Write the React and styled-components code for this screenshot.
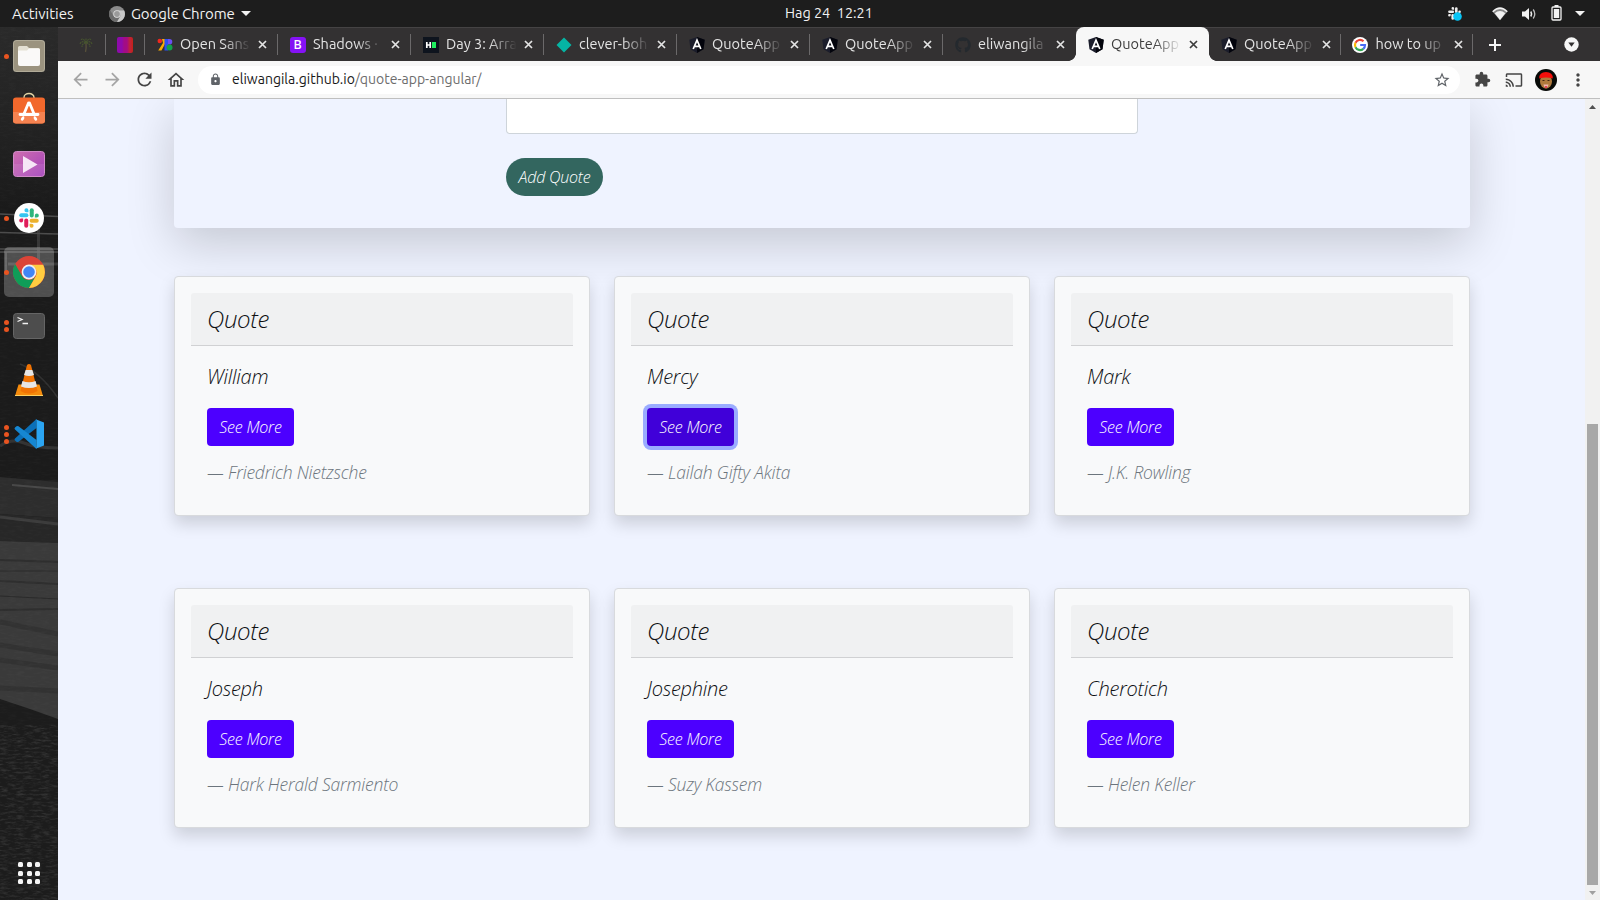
import React from "react";
import styled, { createGlobalStyle, css } from "styled-components";
import {
  MdArrowBack,
  MdArrowForward,
  MdRefresh,
  MdOutlineHome,
  MdLock,
  MdStarBorder,
  MdExtension,
  MdCast,
  MdMoreVert,
} from "react-icons/md";
import { FaGithub } from "react-icons/fa";

const ui = `Ubuntu, "Noto Sans", "Open Sans", sans-serif`;

const GlobalStyle = createGlobalStyle`
  *, *::before, *::after { box-sizing: border-box; }
  html, body { margin: 0; padding: 0; overflow: hidden; }
  body { font-family: ${ui}; background: #eff3ff; }
  svg { display: block; flex: none; }
`;

const Desktop = styled.div`
  width: 1600px;
  height: 900px;
  display: flex;
  flex-direction: column;
  overflow: hidden;
`;

/* ---------- GNOME top bar ---------- */

const TopBar = styled.header`
  height: 27px;
  flex: none;
  background: #1d1d1d;
  color: #f2f2f2;
  display: grid;
  grid-template-columns: 1fr auto 1fr;
  align-items: center;
  font-size: 15px;
  line-height: 27px;
  white-space: pre;
`;

const TopLeft = styled.div`
  display: flex;
  align-items: center;
  padding-left: 12px;
`;

const ActivitiesLabel = styled.span`
  width: 97px;
`;

const AppMenu = styled.div`
  display: flex;
  align-items: center;
  gap: 6px;
`;

const AppName = styled.span`
  width: 104px;
  letter-spacing: -0.12px;
`;

const Clock = styled.div`
  margin-left: 58px;
  width: 88px;
  font-size: 14.4px;
`;

const Tray = styled.div`
  display: flex;
  align-items: center;
  justify-content: flex-end;
  padding-right: 11px;
`;

const TrayItem = styled.div`
  width: ${(p) => p.$w}px;
  display: flex;
  justify-content: center;
`;

const Body = styled.div`
  flex: 1;
  min-height: 0;
  display: flex;
`;

/* ---------- Dock ---------- */

const Dock = styled.nav`
  position: relative;
  width: 58px;
  flex: none;
  background: #1f1f1f;
  display: flex;
  flex-direction: column;
  padding-top: 2px;
  overflow: hidden;
`;

const Wallpaper = styled.svg`
  position: absolute;
  inset: 0;
`;

const DockSlot = styled.div`
  position: relative;
  height: 54px;
  display: flex;
  align-items: center;
`;

const RunningDots = styled.div`
  width: 4px;
  margin-left: 4px;
  display: flex;
  flex-direction: column;
  align-items: center;
  gap: 2px;
  z-index: 1;
`;

const Dot = styled.i`
  width: 5px;
  height: 5px;
  border-radius: 50%;
  background: #e95420;
`;

const DockTile = styled.div`
  width: 50px;
  height: 50px;
  margin-left: -4px;
  border-radius: 5px;
  display: flex;
  align-items: center;
  justify-content: center;
  background: ${(p) => (p.$active ? "rgba(255,255,255,0.23)" : "transparent")};
`;

const AppsButton = styled.div`
  position: relative;
  margin: auto 0 16px 18px;
  width: 22px;
  display: grid;
  grid-template-columns: repeat(3, 5px);
  gap: 3.5px;
`;

const AppsCell = styled.i`
  height: 5px;
  border-radius: 1.5px;
  background: #f5f5f5;
`;

/* ---------- Browser chrome ---------- */

const Browser = styled.main`
  flex: 1;
  min-width: 0;
  display: flex;
  flex-direction: column;
`;

const TabStrip = styled.div`
  height: 34px;
  flex: none;
  display: flex;
  background: #333132;
  border-top: 1px solid #454344;
`;

const PinnedTab = styled.div`
  width: ${(p) => p.$w}px;
  padding-left: ${(p) => p.$pad}px;
  height: 33px;
  display: flex;
  align-items: center;
  position: relative;
`;

const divider = css`
  &::after {
    content: "";
    position: absolute;
    right: 0;
    top: 6px;
    height: 21px;
    width: 1px;
    background: #6b696a;
  }
`;

const PinnedDivided = styled(PinnedTab)`
  ${divider}
`;

const Tab = styled.div`
  position: relative;
  width: ${(p) => p.$w || 133}px;
  flex: none;
  height: 33px;
  display: flex;
  align-items: center;
  padding-left: 11.5px;
  color: #e4e4e4;
  ${(p) => p.$line && divider}
  ${(p) =>
    p.$active &&
    css`
      height: 34px;
      margin-top: -1px;
      padding-top: 1px;
      background: #f7f7f7;
      color: #3c3c3c;
      border-radius: 8px 8px 0 0;
      &::before,
      &::after {
        content: "";
        position: absolute;
        bottom: 0;
        width: 8px;
        height: 8px;
      }
      &::before {
        left: -8px;
        background: radial-gradient(circle at 0 0, transparent 7.6px, #f7f7f7 8.2px);
      }
      &::after {
        right: -8px;
        background: radial-gradient(circle at 100% 0, transparent 7.6px, #f7f7f7 8.2px);
      }
    `}
`;

const Favicon = styled.span`
  width: 16px;
  height: 16px;
  margin-right: 7.5px;
  flex: none;
  display: flex;
  align-items: center;
  justify-content: center;
`;

const TabTitle = styled.span`
  width: 70px;
  flex: none;
  position: relative;
  top: -1px;
  overflow: hidden;
  white-space: nowrap;
  font-size: 14.5px;
  line-height: 22px;
  mask-image: linear-gradient(90deg, #000 62%, transparent 101%);
`;

const TabClose = styled.span`
  margin-left: 8px;
`;

const StripEnd = styled.div`
  flex: 1;
  display: flex;
  align-items: center;
  justify-content: space-between;
  padding: 0 21px 0 16px;
  color: #f5f5f5;
`;

const Gradient = styled.span`
  width: 16px;
  height: 16px;
  border-radius: 2px;
  background: linear-gradient(90deg, #8e0bab 0 30%, #a30c84 45% 62%, #c0223b 80%, #c32318);
`;

const BootstrapMark = styled.span`
  width: 16px;
  height: 16px;
  border-radius: 3px;
  background: #8512f5;
  color: #fff;
  font: 500 12.5px/16px "Noto Sans", sans-serif;
  text-align: center;
`;

const Toolbar = styled.div`
  height: 38px;
  flex: none;
  display: flex;
  align-items: center;
  background: #f7f7f7;
  border-bottom: 1px solid #bfbfbf;
  padding-left: 6px;
`;

const ToolButton = styled.span`
  width: 32px;
  display: flex;
  justify-content: center;
  color: ${(p) => (p.$off ? "#a5a5a5" : "#454545")};
`;

const Omnibox = styled.div`
  width: 1262px;
  height: 28px;
  margin-left: 6px;
  margin-right: 6px;
  border-radius: 14px;
  background: #fff;
  display: flex;
  align-items: center;
  padding: 0 9px 0 11px;
  color: #5f6368;
`;

const Url = styled.span`
  flex: 1;
  margin-left: 10px;
  padding-bottom: 2px;
  font-size: 14px;
  line-height: 22px;
  letter-spacing: 0.01px;
  color: #6d6d6d;
`;

const Host = styled.span`
  color: #181818;
`;

/* ---------- Page ---------- */

const Viewport = styled.div`
  flex: 1;
  min-height: 0;
  display: flex;
`;

const Page = styled.div`
  flex: 1;
  overflow: hidden;
  background: #eff3ff;
  padding: 0 115px 0 116px;
  font-family: "Open Sans", sans-serif;
  font-weight: 300;
  font-style: italic;
  font-size: 16px;
  line-height: 1.5;
  color: #0e1013;
`;

const FormPanel = styled.section`
  height: 129px;
  padding: 0 332px;
  border-radius: 0 0 4px 4px;
  background: #eff3ff;
  box-shadow: 0 16px 48px rgba(0, 0, 0, 0.175);
`;

const TextField = styled.div`
  height: 35px;
  width: 632px;
  border: 1px solid #ced4da;
  border-top: 0;
  border-radius: 0 0 4px 4px;
  background: #fff;
`;

const buttonBase = css`
  display: block;
  height: 38px;
  padding: 0;
  border: 0;
  color: #fff;
  font: inherit;
  font-size: 16px;
  line-height: 38px;
  letter-spacing: -0.22px;
  text-align: center;
`;

const AddButton = styled.button`
  ${buttonBase}
  width: 97px;
  margin-top: 24px;
  border-radius: 20px;
  background: #33665f;
`;

const CardGrid = styled.section`
  margin-top: 48px;
  display: grid;
  grid-template-columns: repeat(3, 416px);
  column-gap: 24px;
  row-gap: 72px;
`;

const Card = styled.article`
  height: 240px;
  padding: 16px;
  border: 1px solid #d8dadd;
  border-radius: 4px;
  background: #f8f9fa;
  background-clip: padding-box;
  box-shadow: 0 8px 16px rgba(0, 0, 0, 0.15);
`;

const CardHeader = styled.h4`
  height: 53px;
  margin: 0;
  padding: 8px 16px;
  border-bottom: 1px solid #d0d1d3;
  border-radius: 3px 3px 0 0;
  background: #f0f1f2;
  font-size: 24px;
  font-weight: 300;
  line-height: 36px;
  letter-spacing: -0.35px;
`;

const CardBody = styled.div`
  padding: 16px;
`;

const Submitter = styled.p`
  margin: 0 0 16px;
  font-size: 20px;
  line-height: 30px;
  letter-spacing: -0.25px;
`;

const MoreButton = styled.button`
  ${buttonBase}
  width: 87px;
  border-radius: 4px;
  background: ${(p) => (p.$focused ? "#4000d9" : "#4c00ff")};
  box-shadow: ${(p) => (p.$focused ? "0 0 0 4px #9aacff" : "none")};
`;

const Author = styled.footer`
  margin-top: 13px;
  font-size: 17.5px;
  line-height: 26px;
  letter-spacing: -0.19px;
  color: #6c757d;
`;

const Scrollbar = styled.div`
  width: 15px;
  flex: none;
  background: #f1f1f1;
  display: flex;
  flex-direction: column;
  align-items: center;
  justify-content: space-between;
  padding: 6px 0 5px;
`;

const Thumb = styled.div`
  width: 11px;
  height: 461px;
  margin: auto 0 6px;
  background: #a8a8a8;
`;

/* ---------- Drawings ---------- */

const CloseMark = () => (
  <svg width="9" height="9" viewBox="0 0 9 9">
    <path d="M1 1l7 7M8 1 1 8" fill="none" stroke="currentColor" strokeWidth="1.7" />
  </svg>
);

const PlusMark = () => (
  <svg width="12" height="12" viewBox="0 0 12 12">
    <path d="M6 0v12M0 6h12" fill="none" stroke="currentColor" strokeWidth="2" />
  </svg>
);

const SlackMark = ({ size, mono }) => {
  const c = mono ? ["#eee", "#eee", "#eee", "#eee"] : ["#36c5f0", "#2eb67d", "#ecb22e", "#e01e5a"];
  return (
    <svg width={size} height={size} viewBox="0 0 24 24">
      {c.map((fill, i) => (
        <g key={i} fill={fill} transform={`rotate(${i * 90} 12 12)`}>
          <rect x="0.3" y="6.3" width="11" height="4.8" rx="2.4" />
          <path d="M8.9 0.2a2.4 2.4 0 0 1 2.4 2.4V5H8.9a2.4 2.4 0 0 1 0-4.8z" />
        </g>
      ))}
    </svg>
  );
};

const ChromeMark = ({ size, colors }) => (
  <svg width={size} height={size} viewBox="0 0 32 32">
    <circle cx="16" cy="16" r="16" fill={colors[0]} />
    <path d="M2.14 8A16 16 0 0 0 16 32l6.9-12A8 8 0 0 1 9 20z" fill={colors[1]} />
    <path d="M30.2 8.8H16A8 8 0 0 1 22.9 20L16 32A16 16 0 0 0 30.2 8.8z" fill={colors[2]} />
    <circle cx="16" cy="16" r="7.4" fill={colors[4]} />
    <circle cx="16" cy="16" r="5.8" fill={colors[3]} />
  </svg>
);

const FilesIcon = () => (
  <svg width="32" height="32" viewBox="0 0 32 32">
    <rect width="32" height="32" rx="3.5" fill="#b1ab98" />
    <rect x="1" y="1" width="30" height="30" rx="3" fill="#9b937f" />
    <path d="M5 9V7.500a1.500 1.500 0 0 1 1.500-1.500H14l2 2h9.500A1.500 1.500 0 0 1 27 9.500V14H5z" fill="#e4e0d3" />
    <path d="M5 10.500h9l2-2h9.500a1.500 1.500 0 0 1 1.500 1.500V24a2 2 0 0 1-2 2H7a2 2 0 0 1-2-2z" fill="#faf9f8" />
  </svg>
);

const SoftwareIcon = () => (
  <svg width="32" height="36" viewBox="0 0 32 36">
    <path d="M11 8V5.500a5 4 0 0 1 10 0V8" fill="none" stroke="#e2d3a4" strokeWidth="1.4" />
    <rect y="5.500" width="32" height="26" rx="3" fill="#f2682c" />
    <path d="M0 20h32v8.500a3 3 0 0 1-3 3H3a3 3 0 0 1-3-3z" fill="#f58250" />
    <path d="M15.500 11 10.500 23M16.500 11l5 12M7 22.500h18M10 26l-.8 1.300M22 26l.8 1.300" stroke="#fff" strokeWidth="2.800" fill="none" strokeLinecap="round" />
  </svg>
);

const VideoIcon = () => (
  <svg width="32" height="26" viewBox="0 0 32 26">
    <defs>
      <linearGradient id="vid" x1="0" y1="0" x2="1" y2="1">
        <stop offset="0" stopColor="#cf6fb0" />
        <stop offset="1" stopColor="#a341bb" />
      </linearGradient>
    </defs>
    <rect x=".5" y=".5" width="31" height="25" rx="3" fill="url(#vid)" stroke="#d08bc8" />
    <path d="M1 13h30v9a3 3 0 0 1-3 3H4a3 3 0 0 1-3-3z" fill="#fff" opacity=".09" />
    <path d="M10 5v17l14.500-8.500z" fill="#f6e6f6" />
  </svg>
);

const SlackIcon = () => (
  <svg width="30" height="30" viewBox="0 0 30 30">
    <circle cx="15" cy="15" r="15" fill="#fff" />
    <svg x="5" y="5" width="20" height="20">
      <SlackMark size={20} />
    </svg>
  </svg>
);

const TerminalIcon = () => (
  <svg width="32" height="26" viewBox="0 0 32 26">
    <rect x=".5" y=".5" width="31" height="25" rx="3" fill="#4d4d4d" stroke="#656565" />
    <path d="M4.500 4.500 9 6.500 4.500 8.500M9.500 10.500h5.500" fill="none" stroke="#f2f2f2" strokeWidth="1.300" />
  </svg>
);

const VlcIcon = () => (
  <svg width="28" height="32" viewBox="0 0 28 32">
    <path d="M3.500 20.500h21L28 32H0z" fill="#f68b0c" />
    <path d="M0 31h28v1H0z" fill="#ffd060" />
    <path d="M12 1q2-2 4 0l6.500 26q-8.500 5-17 0z" fill="#f07304" />
    <path d="M10.700 6h6.600l1.700 5q-5 2-10 0z" fill="#e6e6e6" />
    <path d="M7.400 17q6.600 2.500 13.200 0l1.400 5.500q-8 3-16 0z" fill="#e6e6e6" />
  </svg>
);

const CodeIcon = () => (
  <svg width="30" height="30" viewBox="0 0 30 30">
    <path d="M22.500 0 1 19.500q-1 1 0 2l1.500 1.200q1 .8 2 0L22.500 9z" fill="#0b70b8" />
    <path d="M22.500 30 1 10.500q-1-1 0-2l1.500-1.200q1-.8 2 0L22.500 21z" fill="#1687d2" />
    <path d="M21.500.3 30 3.500v23L21.500 29.700q1-.5 1-2V2.300q0-1.500-1-2z" fill="#2ba5f2" />
  </svg>
);

const AngularMark = () => (
  <svg width="16" height="16" viewBox="0 0 16 16">
    <path d="M8 0 15.700 2.700 14.500 12.300 8 16 1.500 12.300.3 2.700z" fill="#1b1d2b" />
    <path d="M8 0v16l6.500-3.700L15.700 2.700z" fill="#03040c" />
    <path d="M4.200 12 8 3.200 11.800 12M5.800 9.300h4.400" fill="none" stroke="#fff" strokeWidth="1.700" />
  </svg>
);

const GoogleMark = () => (
  <svg width="16" height="16" viewBox="0 0 16 16">
    <circle cx="8" cy="8" r="8" fill="#fff" />
    <g fill="none" strokeWidth="2.200">
      <path d="M11.500 4.300A5 5 0 0 0 3.500 5.800" stroke="#ea4335" />
      <path d="M3.500 5.800a5 5 0 0 0 0 4.400" stroke="#fbbc05" />
      <path d="M3.500 10.200a5 5 0 0 0 7.800 1.600" stroke="#34a853" />
      <path d="M11.300 11.800A5 5 0 0 0 13 8H8.200" stroke="#4a6cf5" />
    </g>
  </svg>
);

const FontsMark = () => (
  <svg width="16" height="16" viewBox="0 0 16 16">
    <path d="M5 2h3.500v4L4.500 13.500H1.200L6 6z" fill="#f9ab00" />
    <rect x="7.500" y="2" width="3.700" height="11.500" fill="#2b50f0" />
    <circle cx="2.800" cy="4" r="2.300" fill="#f0281e" />
    <path d="M11 2h1.500a2.800 2.800 0 0 1 0 5.600H11z" fill="#6a4ff2" />
    <circle cx="12.500" cy="10.600" r="3" fill="#11a04c" />
  </svg>
);

const HackerMark = () => (
  <svg width="16" height="16" viewBox="0 0 16 16">
    <rect width="16" height="16" fill="#0e141e" />
    <path d="M3.800 5v6M7.200 5v6M3.500 8H7" stroke="#fff" strokeWidth="1.700" />
    <rect x="9" y="5" width="4" height="6" fill="#1ff05f" />
  </svg>
);

const DiamondMark = () => (
  <svg width="16" height="16" viewBox="0 0 16 16">
    <path d="M8 .5 15.500 8 8 15.500.5 8z" fill="#05b5a4" />
  </svg>
);

const PalmMark = () => (
  <svg width="14" height="16" viewBox="0 0 14 16" fill="none" stroke="#46532f">
    <path d="M6.500 15q1-4 .5-9" stroke="#57503a" strokeWidth="1.300" />
    <path d="M7 6Q3 3 1 7M7 6q4-3 6 1M7 6Q4 0 2 3M7 6q3-6 5-3M7 6q-4 0-4 4M7 6q4 0 4 4M7 6V1" strokeWidth="1.200" strokeDasharray="2 .6" />
  </svg>
);

const Avatar = () => (
  <svg width="22" height="22" viewBox="0 0 22 22">
    <circle cx="11" cy="11" r="11" fill="#080a08" />
    <ellipse cx="11" cy="12.500" rx="6" ry="7.200" fill="#b07a3c" />
    <path d="M4.200 9.500Q4 3 11 3t6.800 6.500Q11 7.500 4.200 9.500z" fill="#f50f0b" />
    <path d="M7.500 11.500h2M12.500 11.500h2" stroke="#40240f" strokeWidth="1.200" />
    <path d="M8.500 15.500h5q-.5 3-2.500 3t-2.500-3z" fill="#f0b6ad" />
    <path d="M10 17h2v2h-2z" fill="#e2435c" />
  </svg>
);

const Caret = ({ w = 10, h = 5, up, fill = "#f2f2f2" }) => (
  <svg width={w} height={h} viewBox="0 0 10 5" preserveAspectRatio="none">
    <path d={up ? "M0 5 5 0l5 5z" : "M0 0h10L5 5z"} fill={fill} />
  </svg>
);

const SlackTray = () => (
  <svg width="16" height="16" viewBox="0 0 16 16">
    <svg x="1" y="1" width="13" height="13">
      <SlackMark size={13} mono />
    </svg>
    <circle cx="10.500" cy="10.500" r="4.300" fill="#08c4f5" />
  </svg>
);

const Wifi = () => (
  <svg width="16" height="14" viewBox="0 0 16 14">
    <path d="M.7 4.700Q8-2.500 15.300 4.700L8 13.300z" fill="#8a8a8a" />
    <path d="M.7 4.700Q8-2.500 15.300 4.700" fill="none" stroke="#f2f2f2" strokeWidth="1.500" />
    <path d="M2.700 6.200Q8 1.800 13.300 6.200L8 13z" fill="#f2f2f2" />
  </svg>
);

const Volume = () => (
  <svg width="16" height="14" viewBox="0 0 16 14">
    <path d="M1 4.500h3L8 1v12L4 9.500H1z" fill="#f2f2f2" />
    <path d="M9.800 4.500q1.500 2.500 0 5" fill="none" stroke="#f2f2f2" strokeWidth="1.500" />
    <path d="M12.200 2.500q3.200 4.500 0 9" fill="none" stroke="#bdbdbd" strokeWidth="1.300" />
  </svg>
);

const Battery = () => (
  <svg width="11" height="18" viewBox="0 0 11 18">
    <path d="M3.500 0h4v2h-4z" fill="#f2f2f2" />
    <rect x="1" y="2" width="9" height="13" rx="1" fill="none" stroke="#f2f2f2" strokeWidth="1.300" />
    <rect x="2.800" y="4" width="5.400" height="9" fill="#f2f2f2" />
  </svg>
);

const DropCircle = () => (
  <svg width="15" height="15" viewBox="0 0 15 15">
    <circle cx="7.500" cy="7.500" r="7.200" fill="#f7f7f7" />
    <path d="M4.300 5.500h6.400l-3.200 4.300z" fill="#333132" />
  </svg>
);

const DockWallpaper = () => (
  <Wallpaper width="58" height="873" viewBox="0 27 58 873">
    <defs>
      <filter id="grain" x="0" y="0" width="100%" height="100%">
        <feTurbulence type="fractalNoise" baseFrequency="0.12 0.5" numOctaves="3" seed="4" />
        <feColorMatrix values="0 0 0 0 1  0 0 0 0 1  0 0 0 0 1  0.9 0 0 0 -0.38" />
      </filter>
      <linearGradient id="sky" x1="0" y1="0" x2="0" y2="1">
        <stop offset="0" stopColor="#2a2a2a" />
        <stop offset=".55" stopColor="#222" />
        <stop offset="1" stopColor="#191919" />
      </linearGradient>
    </defs>
    <rect y="27" width="58" height="193" fill="url(#sky)" />
    <rect y="215" width="58" height="265" fill="#1b1b1b" />
    <g stroke="#4b4b4b" fill="none">
      <path d="M0 214l58 2.500M0 232.500l58 1.500M0 249h58M0 252h58M6 252v22" strokeWidth="1.500" />
      <path d="M8 264h50M38.500 215v49" strokeWidth="3" opacity=".6" />
      <path d="M20 364q20 8 38 34" stroke="#303030" strokeWidth="1.500" />
      <path d="M0 446q12-8 24-3t34 5" stroke="#333" strokeWidth="3" />
    </g>
    <path d="M0 477l58 5v36L0 514z" fill="#2d2d2d" />
    <path d="M12 485l46 4" stroke="#484848" strokeWidth="2" />
    <path d="M0 514l58 4v25l-58-2z" fill="#272727" />
    <path d="M0 517l58 7" stroke="#3c3c3c" strokeWidth="3" />
    <path d="M0 541l58 2v178L30 710 0 700z" fill="#3a3a3a" />
    <g stroke="#2a2a2a" fill="none">
      <path d="M0 560l58 2M0 581l58 3M0 610l58-1" strokeWidth="2" opacity=".7" />
      <path d="M0 622l58 12M0 645l58 9M0 660l58 8M0 688l58 3" strokeWidth="5" opacity=".45" />
      <path d="M0 571h58M0 596l58 3" strokeWidth="1" />
    </g>
    <path d="M0 699l30 10 28 10v181H0z" fill="#1c1c1c" />
    <rect y="27" width="58" height="873" filter="url(#grain)" opacity=".06" />
    <rect y="725" width="58" height="175" filter="url(#grain)" opacity=".22" />
  </Wallpaper>
);

/* ---------- Data ---------- */

const dockApps = [
  { icon: <FilesIcon />, dots: 1 },
  { icon: <SoftwareIcon />, dots: 0 },
  { icon: <VideoIcon />, dots: 0 },
  { icon: <SlackIcon />, dots: 1 },
  {
    icon: <ChromeMark size={32} colors={["#db4437", "#0f9d58", "#ffcd40", "#4285f4", "#f1f1f1"]} />,
    dots: 1,
    active: true,
  },
  { icon: <TerminalIcon />, dots: 2 },
  { icon: <VlcIcon />, dots: 0 },
  { icon: <CodeIcon />, dots: 3 },
];

const tabs = [
  { icon: <FontsMark />, title: "Open Sans" },
  { icon: <BootstrapMark>B</BootstrapMark>, title: "Shadows ·" },
  { icon: <HackerMark />, title: "Day 3: Arra" },
  { icon: <DiamondMark />, title: "clever-boh" },
  { icon: <AngularMark />, title: "QuoteApp" },
  { icon: <AngularMark />, title: "QuoteApp" },
  { icon: <FaGithub size={16} color="#24292e" />, title: "eliwangila" },
  { icon: <AngularMark />, title: "QuoteApp", active: true },
  { icon: <AngularMark />, title: "QuoteApp", w: 131.5 },
  { icon: <GoogleMark />, title: "how to up", w: 132 },
];

const quotes = [
  { name: "William", author: "Friedrich Nietzsche" },
  { name: "Mercy", author: "Lailah Gifty Akita", focused: true },
  { name: "Mark", author: "J.K. Rowling" },
  { name: "Joseph", author: "Hark Herald Sarmiento" },
  { name: "Josephine", author: "Suzy Kassem" },
  { name: "Cherotich", author: "Helen Keller" },
];

export default function App() {
  return (
    <Desktop>
      <GlobalStyle />
      <TopBar>
        <TopLeft>
          <ActivitiesLabel>Activities</ActivitiesLabel>
          <AppMenu>
            <ChromeMark size={16} colors={["#8b8b8b", "#6c6c6c", "#c9c9c9", "#9a9a9a", "#e0e0e0"]} />
            <AppName>Google Chrome</AppName>
            <Caret />
          </AppMenu>
        </TopLeft>
        <Clock>Hag 24  12:21</Clock>
        <Tray>
          <TrayItem $w={60}><SlackTray /></TrayItem>
          <TrayItem $w={30}><Wifi /></TrayItem>
          <TrayItem $w={28}><Volume /></TrayItem>
          <TrayItem $w={27}><Battery /></TrayItem>
          <TrayItem $w={19}><Caret /></TrayItem>
        </Tray>
      </TopBar>
      <Body>
        <Dock>
          <DockWallpaper />
          {dockApps.map((app, i) => (
            <DockSlot key={i}>
              <RunningDots>
                {Array.from({ length: app.dots }, (_, n) => (
                  <Dot key={n} />
                ))}
              </RunningDots>
              <DockTile $active={app.active}>{app.icon}</DockTile>
            </DockSlot>
          ))}
          <AppsButton>
            {Array.from({ length: 9 }, (_, n) => (
              <AppsCell key={n} />
            ))}
          </AppsButton>
        </Dock>
        <Browser>
          <TabStrip>
            <PinnedDivided $w={48} $pad={21}><PalmMark /></PinnedDivided>
            <PinnedDivided $w={39} $pad={11}><Gradient /></PinnedDivided>
            {tabs.map((t, i) => (
              <Tab key={i} $w={t.w} $active={t.active} $line={!t.active && !(tabs[i + 1] && tabs[i + 1].active)}>
                <Favicon>{t.icon}</Favicon>
                <TabTitle>{t.title}</TabTitle>
                <TabClose><CloseMark /></TabClose>
              </Tab>
            ))}
            <StripEnd>
              <PlusMark />
              <DropCircle />
            </StripEnd>
          </TabStrip>
          <Toolbar>
            <ToolButton $off><MdArrowBack size={21} /></ToolButton>
            <ToolButton $off><MdArrowForward size={21} /></ToolButton>
            <ToolButton><MdRefresh size={21} /></ToolButton>
            <ToolButton><MdOutlineHome size={20} /></ToolButton>
            <Omnibox>
              <MdLock size={13} />
              <Url><Host>eliwangila.github.io</Host>/quote-app-angular/</Url>
              <MdStarBorder size={18} />
            </Omnibox>
            <ToolButton><MdExtension size={17} /></ToolButton>
            <ToolButton><MdCast size={18} /></ToolButton>
            <ToolButton><Avatar /></ToolButton>
            <ToolButton><MdMoreVert size={20} /></ToolButton>
          </Toolbar>
          <Viewport>
            <Page>
              <FormPanel>
                <TextField />
                <AddButton>Add Quote</AddButton>
              </FormPanel>
              <CardGrid>
                {quotes.map((q) => (
                  <Card key={q.name}>
                    <CardHeader>Quote</CardHeader>
                    <CardBody>
                      <Submitter>{q.name}</Submitter>
                      <MoreButton $focused={q.focused}>See More</MoreButton>
                      <Author>— {q.author}</Author>
                    </CardBody>
                  </Card>
                ))}
              </CardGrid>
            </Page>
            <Scrollbar>
              <Caret w={7} h={4} up fill="#505050" />
              <Thumb />
              <Caret w={7} h={4} fill="#a0a0a0" />
            </Scrollbar>
          </Viewport>
        </Browser>
      </Body>
    </Desktop>
  );
}
